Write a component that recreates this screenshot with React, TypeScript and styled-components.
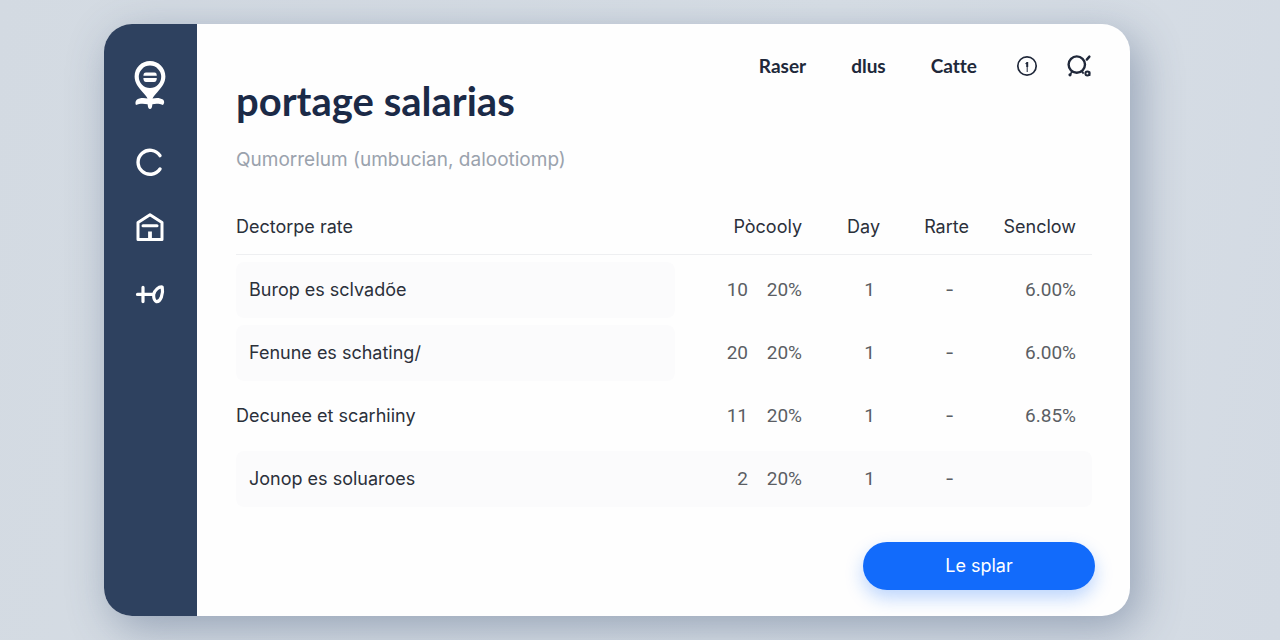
import React from "react";
import styled, { createGlobalStyle } from "styled-components";

const GlobalStyle = createGlobalStyle`
  *, *::before, *::after { box-sizing: border-box; }
  body {
    margin: 0;
    font-family: Inter, "Liberation Sans", sans-serif;
    font-size: 18px;
    line-height: 28px;
    color: #2b303a;
    background: #d5dce4;
  }
`;

const Page = styled.div`
  display: flex;
  min-height: 100vh;
  padding: 24px 150px 24px 104px;
  background: linear-gradient(100deg, #d3dae2, #d8dfe6 60%, #d3dae3);
`;

const Card = styled.div`
  display: flex;
  flex: 1;
  min-width: 0;
  border-radius: 28px;
  overflow: hidden;
  background: #fefefe;
  box-shadow: 8px 12px 44px rgba(62, 84, 120, 0.42);
`;

const Sidebar = styled.nav`
  display: flex;
  flex-direction: column;
  align-items: center;
  gap: 34px;
  flex: none;
  width: 93px;
  padding: 36px 2px 0 0;
  background: #2e415f;
`;

const SideLink = styled.a`
  display: block;
  color: #ffffff;

  svg { display: block; }
`;

const Main = styled.main`
  display: flex;
  flex-direction: column;
  flex: 1;
  min-width: 0;
  padding: 28px 35px 25px 39px;
`;

const Header = styled.header`
  display: flex;
  justify-content: space-between;
  align-items: flex-start;
  padding-right: 3px;
`;

const Heading = styled.div`
  padding-top: 25px;
`;

const Title = styled.h1`
  margin: 0;
  font-family: Lato, sans-serif;
  font-size: 40px;
  font-weight: 700;
  line-height: 48px;
  color: #1b2a47;
`;

const Subtitle = styled.p`
  margin: 21px 0 0;
  font-size: 19px;
  color: #9aa2ad;
`;

const TopNav = styled.nav`
  display: flex;
  align-items: center;
  gap: 45px;
  height: 28px;
`;

const TopLink = styled.a`
  font-family: Lato, sans-serif;
  font-size: 19px;
  font-weight: 700;
  font-variant-ligatures: none;
  color: #20283a;
  text-decoration: none;
`;

const Tools = styled.div`
  display: flex;
  align-items: center;
  gap: 28px;
  margin-left: -6px;
`;

const ToolButton = styled.button`
  display: block;
  padding: 0;
  border: 0;
  background: none;
  color: #20283a;
  cursor: pointer;

  svg { display: block; }
`;

const TableArea = styled.div`
  margin-top: 18px;
  padding-right: 3px;
`;

const Table = styled.table`
  width: 100%;
  table-layout: fixed;
  border-collapse: separate;
  border-spacing: 0 7px;
`;

const Column = styled.col<{ $width?: number }>`
  width: ${(p) => (p.$width ? `${p.$width}px` : "auto")};
`;

const HeadCell = styled.th<{ $align?: "left" | "right"; $inset?: number }>`
  height: 56px;
  padding: 0 ${(p) => p.$inset ?? 0}px 0 0;
  border-bottom: 1px solid #eeeff1;
  font-weight: 400;
  text-align: ${(p) => p.$align ?? "right"};
`;

type Tone = "label" | "plain" | "full";

const labelRadius = { label: "8px", plain: "0", full: "8px 0 0 8px" };

const LabelCell = styled.th<{ $tone: Tone }>`
  height: 56px;
  padding: 0 0 0 ${(p) => (p.$tone === "plain" ? 0 : 13)}px;
  border-radius: ${(p) => labelRadius[p.$tone]};
  background: ${(p) => (p.$tone === "plain" ? "none" : "#fbfbfc")};
  font-weight: 400;
  text-align: left;
`;

const ValueCell = styled.td<{ $tone: Tone; $inset: number }>`
  padding: 0 ${(p) => p.$inset}px 0 0;
  background: ${(p) => (p.$tone === "full" ? "#fbfbfc" : "none")};
  font-family: Roboto, sans-serif;
  font-size: 19px;
  color: #5b5e64;
  text-align: right;

  &:last-child { border-radius: 0 8px 8px 0; }
`;

const DashCell = styled(ValueCell)`
  font-family: Inter, sans-serif;
`;

const Actions = styled.div`
  display: flex;
  justify-content: flex-end;
  margin-top: 28px;
`;

const PrimaryButton = styled.button`
  width: 232px;
  height: 48px;
  padding: 0;
  border: 0;
  border-radius: 24px;
  background: #126bfb;
  box-shadow: 0 8px 18px rgba(18, 107, 251, 0.28);
  color: #ffffff;
  font: inherit;
  cursor: pointer;
`;

const PinIcon = () => (
  <svg width="32" height="52" viewBox="0 0 32 52" fill="currentColor" aria-hidden="true">
    <path
      fillRule="evenodd"
      d="M16 1C7.500 1 .6 7.500 .6 16.500C.6 23 4.500 27.500 8.500 32C11 35 13 37 13.500 38.600C10 37.600 5 37.800 2.500 40C1.200 41.500 1.200 44 2 45C5 43.600 9 43.200 13.600 44.200C14 47.500 14.500 49 16 49C17.500 49 18 47.500 18.400 44.200C22 43.200 26 43.600 29 45C30.600 43.500 30.600 41 29 39.600C26 37.600 22 37.600 18.500 38.600C19 37 21 35 23.500 32C27.500 27.500 31.400 23 31.400 16.500C31.400 7.500 24.500 1 16 1ZM16 5.600A11.200 11.200 0 1 1 16 28A11.200 11.200 0 1 1 16 5.600Z"
    />
    <path d="M12 12.400H20.500Q22.800 12.400 22.800 15.800H9.400Q9.400 12.400 12 12.400Z" />
    <path d="M9.400 18H22.800Q22.800 22 20 22H12Q9.400 22 9.400 18Z" />
  </svg>
);

const RingIcon = () => (
  <svg width="32" height="32" viewBox="0 0 32 32" fill="none" stroke="currentColor" strokeWidth="3.400" strokeLinecap="round" aria-hidden="true">
    <path d="M26 9.600A12 12 0 1 0 26 23" />
  </svg>
);

const HouseIcon = () => (
  <svg width="32" height="32" viewBox="0 0 32 32" fill="none" stroke="currentColor" strokeWidth="3" aria-hidden="true">
    <path d="M4 10.400L16 2.800L28 10.400V27.400H4Z" strokeLinejoin="round" />
    <path d="M9 13.800H23" strokeLinecap="round" />
    <path d="M16 19.500V27" strokeWidth="3.800" />
  </svg>
);

const KeyIcon = () => (
  <svg width="32" height="32" viewBox="0 0 32 32" fill="none" stroke="currentColor" strokeWidth="3.200" strokeLinecap="round" aria-hidden="true">
    <path d="M3.500 16.400H19.500M9 9.400V23.600" />
    <path d="M28.200 9C25 8.400 20.400 12 19.600 16.600C19.600 20 20.200 23 22.400 23.600C26.500 24 29.600 16 28.200 9Z" strokeLinejoin="round" />
  </svg>
);

const InfoIcon = () => (
  <svg width="22" height="22" viewBox="0 0 22 22" fill="none" stroke="currentColor" strokeWidth="1.700" aria-hidden="true">
    <circle cx="11" cy="11" r="9.200" />
    <path d="M11.200 7V12" strokeWidth="2" />
    <path d="M11.200 12V17" strokeWidth="1" />
    <path d="M9.400 8.600H11" strokeWidth="1" />
  </svg>
);

const OrbitIcon = () => (
  <svg width="26" height="26" viewBox="0 0 26 26" fill="none" stroke="currentColor" strokeWidth="2.400" aria-hidden="true">
    <circle cx="10.800" cy="11.600" r="8.200" />
    <path d="M20.800 6.600L23.400 3.600" strokeLinecap="round" />
    <path d="M6 18.500L4.400 21.400" strokeWidth="1.600" />
    <circle cx="4" cy="21.800" r="1.600" fill="currentColor" stroke="none" />
    <path d="M15.600 18L17.600 20.600" strokeWidth="1.800" />
    <circle cx="21.400" cy="20.400" r="2" strokeWidth="2" />
    <path d="M23.600 18.500V23" strokeWidth="1.600" />
  </svg>
);

const sideItems = [
  { label: "Location", Icon: PinIcon },
  { label: "Activity", Icon: RingIcon },
  { label: "Home", Icon: HouseIcon },
  { label: "Access", Icon: KeyIcon },
];

const rows: { label: string; tone: Tone; values: string[] }[] = [
  { label: "Burop es sclvadõe", tone: "label", values: ["10", "20%", "1", "-", "6.00%"] },
  { label: "Fenune es schating/", tone: "label", values: ["20", "20%", "1", "-", "6.00%"] },
  { label: "Decunee et scarhiiny", tone: "plain", values: ["11", "20%", "1", "-", "6.85%"] },
  { label: "Jonop es soluaroes", tone: "full", values: ["2", "20%", "1", "-", ""] },
];

const valueInsets = [0, 0, 5, 15, 16];

export default function App() {
  return (
    <>
      <GlobalStyle />
      <Page>
        <Card>
          <Sidebar aria-label="Sections">
            {sideItems.map(({ label, Icon }) => (
              <SideLink key={label} href="#" aria-label={label}>
                <Icon />
              </SideLink>
            ))}
          </Sidebar>
          <Main>
            <Header>
              <Heading>
                <Title>portage salarias</Title>
                <Subtitle>Qumorrelum (umbucian, dalootiomp)</Subtitle>
              </Heading>
              <TopNav aria-label="Main">
                <TopLink href="#">Raser</TopLink>
                <TopLink href="#">dlus</TopLink>
                <TopLink href="#">Catte</TopLink>
                <Tools>
                  <ToolButton type="button" aria-label="Information">
                    <InfoIcon />
                  </ToolButton>
                  <ToolButton type="button" aria-label="Settings">
                    <OrbitIcon />
                  </ToolButton>
                </Tools>
              </TopNav>
            </Header>
            <TableArea>
              <Table>
                <colgroup>
                  <Column />
                  <Column $width={73} />
                  <Column $width={54} />
                  <Column $width={78} />
                  <Column $width={89} />
                  <Column $width={123} />
                </colgroup>
                <thead>
                  <tr>
                    <HeadCell scope="col" $align="left">Dectorpe rate</HeadCell>
                    <HeadCell scope="col" colSpan={2}>Pòcooly</HeadCell>
                    <HeadCell scope="col">Day</HeadCell>
                    <HeadCell scope="col">Rarte</HeadCell>
                    <HeadCell scope="col" $inset={16}>Senclow</HeadCell>
                  </tr>
                </thead>
                <tbody>
                  {rows.map((row) => (
                    <tr key={row.label}>
                      <LabelCell scope="row" $tone={row.tone}>{row.label}</LabelCell>
                      {row.values.map((value, i) => {
                        const Cell = value === "-" ? DashCell : ValueCell;
                        return (
                          <Cell key={i} $tone={row.tone} $inset={valueInsets[i]}>{value}</Cell>
                        );
                      })}
                    </tr>
                  ))}
                </tbody>
              </Table>
            </TableArea>
            <Actions>
              <PrimaryButton type="button">Le splar</PrimaryButton>
            </Actions>
          </Main>
        </Card>
      </Page>
    </>
  );
}
